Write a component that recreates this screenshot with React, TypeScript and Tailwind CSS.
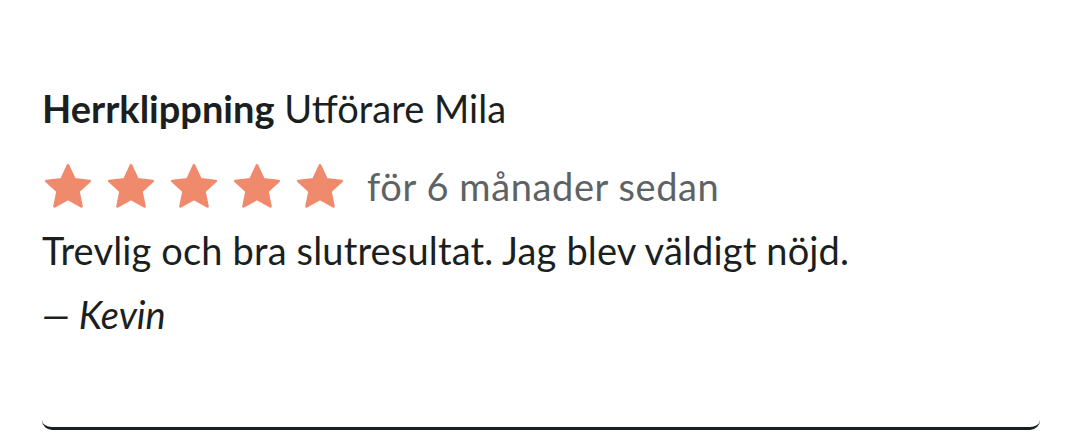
const Star = () => (
    <svg viewBox="1.9 2 20.2 19.3" className="w-[46px] h-[44px] shrink-0">
        <path
            d="M12 2.6l2.85 6.1 6.65.75-4.95 4.55 1.35 6.6L12 17.3l-5.9 3.3 1.35-6.6L2.5 9.45l6.65-.75z"
            fill="#f08a6c"
            stroke="#f08a6c"
            strokeWidth="1.2"
            strokeLinejoin="round"
        />
    </svg>
)

export default function App() {
    return (
        <div className="w-[1080px] h-[433px] bg-white pl-[42px] pr-[40px] pt-[85px] font-['Lato',sans-serif] text-[#1b1f21]">
            <div className="border-b-[3px] border-[#1b1f21] rounded-b-[10px] pb-[90px]">
                <p className="text-[38px] leading-[46px]">
                    <span className="font-bold">Herrklippning</span> Utförare Mila
                </p>
                <div className="flex items-center h-[46px] mt-[32px]">
                    <div className="flex gap-[17px] ml-[3px]">
                        <Star />
                        <Star />
                        <Star />
                        <Star />
                        <Star />
                    </div>
                    <span className="ml-[24px] text-[38px] leading-[46px] tracking-[0.6px] text-[#5d6364]">för 6 månader sedan</span>
                </div>
                <p className="mt-[18px] text-[38px] leading-[46px] tracking-[0.15px]">Trevlig och bra slutresultat. Jag blev väldigt nöjd.</p>
                <p className="mt-[18px] text-[38px] leading-[46px] italic">— Kevin</p>
            </div>
        </div>
    )
}
